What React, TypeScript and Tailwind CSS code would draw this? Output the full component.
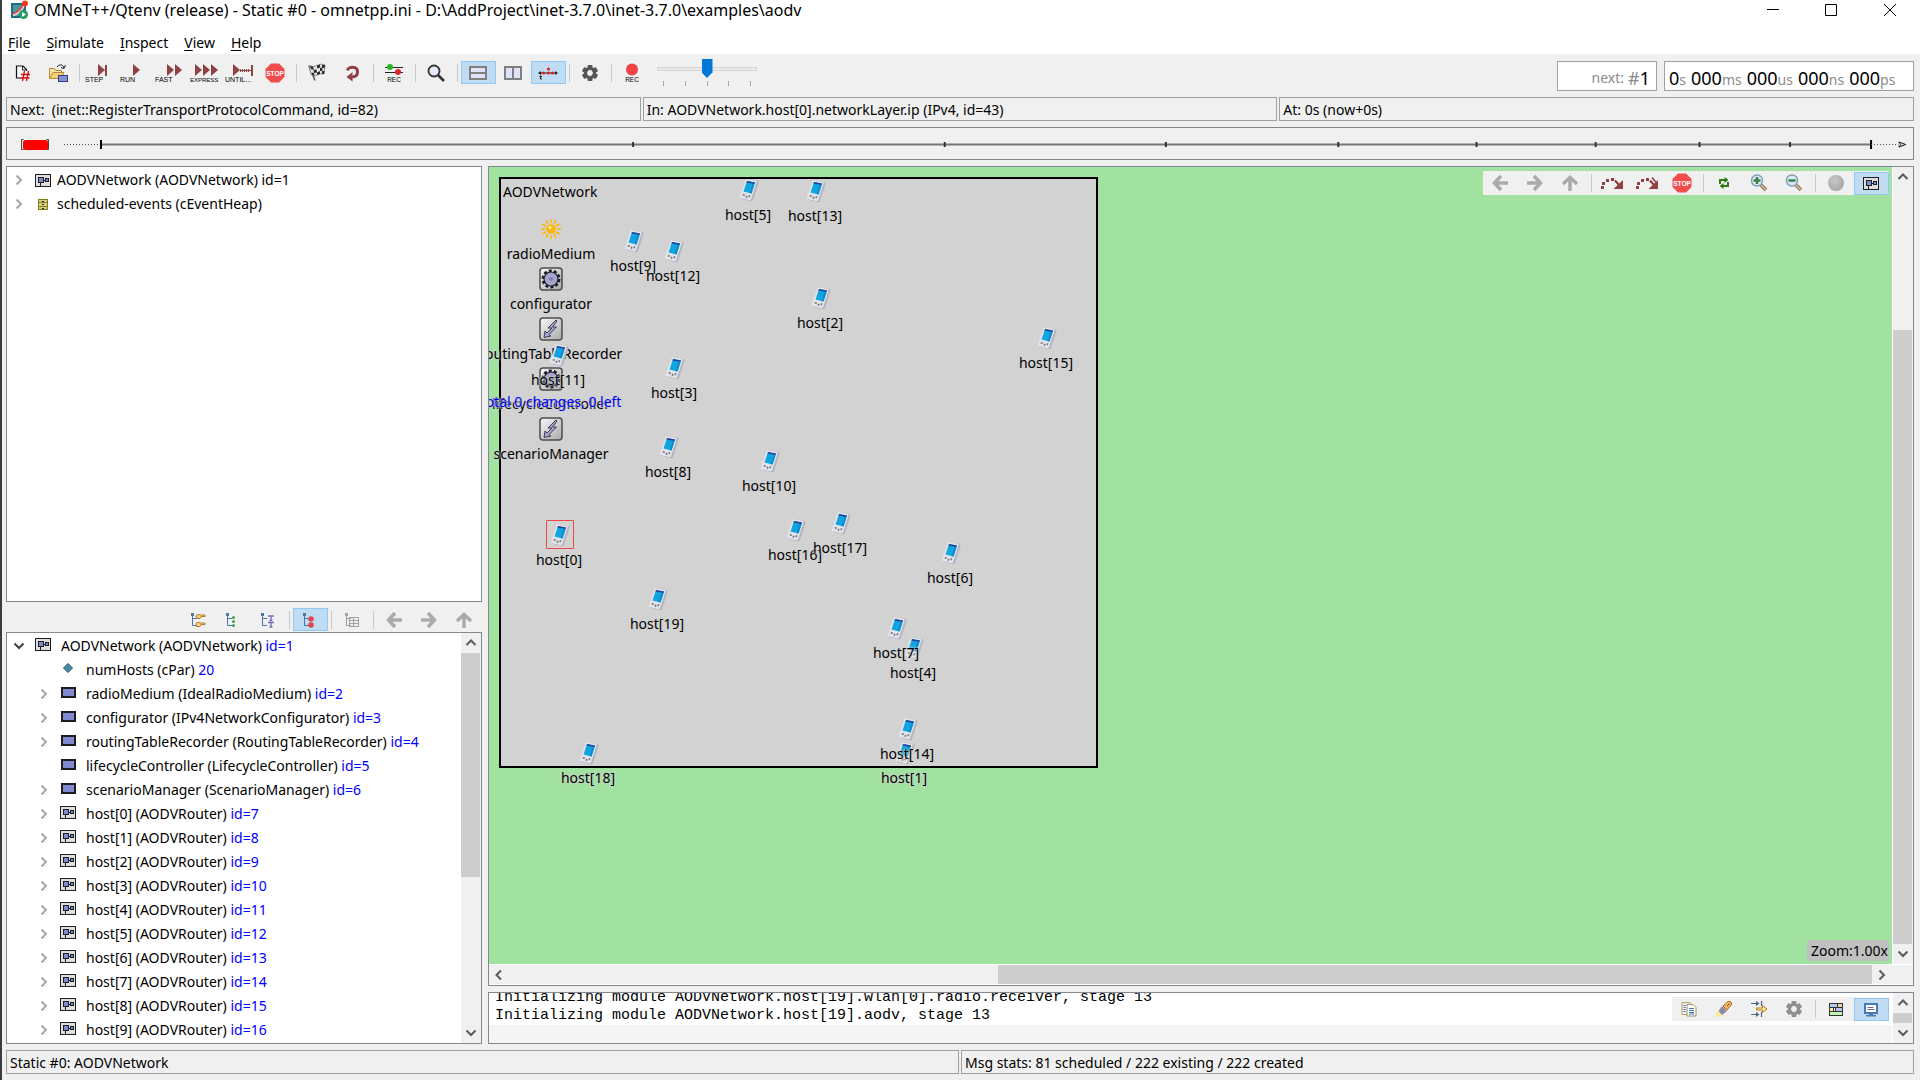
import React from "react";

/* ---------- shared pieces ---------- */

function ToolButton({ label, active, children }: { label: string; active?: boolean; children: React.ReactNode }) {
  return (
    <button
      type="button"
      aria-label={label}
      title={label}
      aria-pressed={active}
      className={
        "flex h-[23px] w-[35px] shrink-0 items-center justify-center pr-0.5 " +
        (active ? "border border-[#90c8f6] bg-[#c0dcf3]" : "")
      }
    >
      {children}
    </button>
  );
}

function Sep() {
  return (
    <div className="flex h-[18px] w-[7px] shrink-0 justify-center">
      <div className="w-px bg-[#c8c8c8]" />
    </div>
  );
}

function Chevron({ dir }: { dir: "up" | "down" | "left" | "right" }) {
  const d = {
    up: "M1.5 8 6 3.500l4.500 4.500",
    down: "M1.5 3.500 6 8l4.500-4.500",
    left: "M8 1.500 3.500 6 8 10.500",
    right: "M3.500 1.500 8 6 3.500 10.500",
  }[dir];
  return (
    <svg viewBox="0 0 12 12" className="size-3 shrink-0" fill="none" stroke="currentColor" strokeWidth="2">
      <path d={d} />
    </svg>
  );
}

function ScrollButton({ dir }: { dir: "up" | "down" | "left" | "right" }) {
  return (
    <button type="button" aria-label={"Scroll " + dir} className="flex size-5 shrink-0 items-center justify-center pr-px text-[#5a5a5a]">
      <Chevron dir={dir} />
    </button>
  );
}

/* ---------- icons ---------- */

function StopIcon() {
  return (
    <svg viewBox="0 0 20 20" className="size-5">
      <path d="M6 .5h8L19.500 6v8L14 19.500H6L.5 14V6z" fill="#f24c4c" />
      <text x="10" y="12.500" textAnchor="middle" fontSize="6.500" fontWeight="bold" fill="#fff" fontFamily="Liberation Sans, sans-serif">STOP</text>
    </svg>
  );
}

function PlayIcon({ text, kind }: { text: string; kind: "step" | "run" | "fast" | "express" | "until" }) {
  const starts = { step: [13], run: [13], fast: [12, 20], express: [5, 13, 21], until: [8] }[kind];
  return (
    <svg viewBox="0 0 30 22" className="h-[22px] w-[30px]" fill="#8f4143">
      {starts.map((x) => (
        <path key={x} d={`M${x} 2v12l7-6z`} />
      ))}
      {kind === "step" && <path d="M20 3h2v11h-2z" />}
      {kind === "until" && <path d="M15 7h1v3h-1zM15 8h11v1H15zM17 7h1v3h-1zM19 7h1v3h-1zM21 7h1v3h-1zM23 7h1v3h-1zM26 3h2v11h-2z" />}
      <text x="0" y="19.500" fontSize={kind === "express" ? "6" : "7"} fill="#000" fontFamily="Liberation Sans, sans-serif">{text}</text>
    </svg>
  );
}

function NewRunIcon() {
  return (
    <svg viewBox="0 0 18 18" className="size-[18px]" fill="none">
      <path d="M7 14H2.500V2H9l3.500 3.500V7" stroke="#111" strokeWidth="1.200" fill="#fafafa" />
      <path d="M8.500 2v4h4" stroke="#222" />
      <path d="M10.500 7 8.500 17M14.500 7l-2 10M7 10.500h9M6.500 14h9" stroke="#d01010" strokeWidth="1.300" />
    </svg>
  );
}

function OpenIcon() {
  return (
    <svg viewBox="0 0 20 20" className="size-5" fill="none">
      <path d="M1.500 15V5.500h5l1 2h6V11" fill="#f7e3a0" stroke="#b98a35" />
      <path d="M1.500 15.500 5 9.500h11l-3 6z" fill="#f5cf75" stroke="#b98a35" />
      <path d="M9 4c2-3 6-3 7 1m1.500-3L16 5.500 13 4.500" stroke="#222" />
      <rect x="10.500" y="12.500" width="9" height="6" fill="#8690d8" stroke="#303a80" />
    </svg>
  );
}

function FlagIcon() {
  return (
    <svg viewBox="0 0 20 20" className="size-5">
      <path d="M2 3 8 17.500" stroke="#555" strokeWidth="1.500" />
      <path d="M2 2.500q4 2.500 8 0t8-.5l-1 9q-4-1-7 1t-6-.5z" fill="#e8e8e8" stroke="#444" strokeWidth=".6" />
      <path d="M3 3l3 .8 1 3-3-.5zM10 2.500l3-1 .2 3-3 1zM15 2h3l-.5 3H15zM6.500 7l3-.5.500 3-3 .5zM13 4.700l2.500.3-.3 3H13zM10 9.500l3-1.500v3l-3 1zM15 8h2.500l-.5 3h-2zM4.500 9.500l2.500.5.500 2.500-2.500-.8z" fill="#2b2b2b" />
    </svg>
  );
}

function RebuildIcon() {
  return (
    <svg viewBox="0 0 18 18" className="size-[18px]" fill="none">
      <path d="M4.500 6.500C5 2.500 14.500 1.500 14.500 8c0 4-3 5-6 5" stroke="#8f4143" strokeWidth="3" />
      <path d="M9.500 8v9.500L3.500 13z" fill="#8f4143" />
    </svg>
  );
}

function RecFilterIcon() {
  return (
    <svg viewBox="0 0 20 20" className="size-5">
      <path d="M1 4.500h18M1 9.500h18" stroke="#222" />
      <circle cx="6" cy="4" r="3" fill="#28b428" />
      <circle cx="14" cy="9" r="3" fill="#d62a2a" />
      <text x="10" y="18.500" textAnchor="middle" fontSize="6.500" fill="#000" fontFamily="Liberation Sans, sans-serif">REC</text>
    </svg>
  );
}

function SearchIcon() {
  return (
    <svg viewBox="0 0 18 18" className="size-[18px]" fill="none" stroke="#333">
      <circle cx="7" cy="7" r="5.500" strokeWidth="1.800" fill="#e4eafa" />
      <path d="m11 11 6 6" strokeWidth="2.600" />
    </svg>
  );
}

function SplitIcon({ vertical }: { vertical?: boolean }) {
  return (
    <svg viewBox="0 0 18 14" className="h-3.5 w-[18px]">
      <rect x="1" y="1" width="16" height="12" fill="#dfe3f8" stroke="#808080" strokeWidth="2" />
      <path d={vertical ? "M9 1v12" : "M1 7h16"} stroke="#808080" strokeWidth="2" />
    </svg>
  );
}

function TimelineIcon() {
  return (
    <svg viewBox="0 0 20 14" className="h-3.5 w-5">
      <path d="M1 7h18" stroke="#222" />
      <path d="M0 7l3-2v4zM20 7l-3-2v4z" fill="#222" />
      <g fill="#e02020">
        <circle cx="5.500" cy="7" r="1.500" />
        <circle cx="10.500" cy="7" r="1.500" />
        <circle cx="14.500" cy="7" r="1.500" />
        <circle cx="10.500" cy="3" r="1.600" />
      </g>
      <path d="M2.500 9.500v3.500h1.500M1.500 10.500h2.500" stroke="#222" fill="none" />
    </svg>
  );
}

function GearIcon({ color }: { color: string }) {
  return (
    <svg viewBox="0 0 18 18" className="size-[18px]">
      <g fill={color}>
        {[0, 60, 120, 180, 240, 300].map((a) => (
          <rect key={a} x="6.500" y="1" width="5" height="5" rx="1" transform={`rotate(${a} 9 9)`} />
        ))}
      </g>
      <circle cx="9" cy="9" r="4.500" fill="none" stroke={color} strokeWidth="3.200" />
    </svg>
  );
}

function RecordIcon() {
  return (
    <svg viewBox="0 0 18 20" className="h-5 w-[18px]">
      <circle cx="9" cy="6.500" r="6" fill="#ee4444" />
      <text x="9" y="18.500" textAnchor="middle" fontSize="6.500" fill="#000" fontFamily="Liberation Sans, sans-serif">REC</text>
    </svg>
  );
}

function ArrowIcon({ dir }: { dir: "left" | "right" | "up" }) {
  const angle = { left: 0, right: 180, up: 90 }[dir];
  return (
    <svg viewBox="0 0 18 18" className="size-[18px]" fill="none" stroke="#aaaaaa" strokeWidth="3.500">
      <g transform={`rotate(${angle} 9 9)`}>
        <path d="M10 2 3.500 9l6.500 7M3.500 9H17" />
      </g>
    </svg>
  );
}

function CompoundIcon() {
  return (
    <svg viewBox="0 0 16 13" className="h-[13px] w-4 shrink-0" shapeRendering="crispEdges">
      <rect x=".5" y=".5" width="15" height="12" fill="#dedede" stroke="#1e1e1e" />
      <rect x="3.500" y="3.500" width="5" height="5" fill="#8189d2" stroke="#1e1e1e" />
      <rect x="10.500" y="4.500" width="3" height="3" fill="#8189d2" stroke="#1e1e1e" />
      <path d="M9 6.500h1M5.500 9v3" stroke="#1e1e1e" />
    </svg>
  );
}

function SimpleIcon() {
  return (
    <svg viewBox="0 0 16 13" className="h-[13px] w-4 shrink-0" shapeRendering="crispEdges">
      <rect x="2" y="2" width="13" height="9" fill="#8189d2" stroke="#1c1c1c" strokeWidth="2" />
    </svg>
  );
}

function ParamIcon() {
  return (
    <svg viewBox="0 0 16 13" className="h-[13px] w-4 shrink-0">
      <path d="M8 1.500 12.500 6 8 10.500 3.500 6z" fill="#468a96" stroke="#28508c" />
    </svg>
  );
}

function HeapIcon() {
  return (
    <svg viewBox="0 0 16 13" className="h-[13px] w-4 shrink-0" shapeRendering="crispEdges">
      <rect x="3.500" y="1.500" width="9" height="10" fill="#d4d08c" stroke="#80800c" />
      <path d="M4 4.500h8M4 8.500h8" stroke="#80800c" />
      <path d="M7 3h2M7 6.500h2M7 10.500h2" stroke="#222" />
    </svg>
  );
}

function JumpIcon({ double }: { double?: boolean }) {
  return (
    <svg viewBox="0 0 24 14" className="h-3.5 w-6" fill="#8f4143">
      <path d="M1 10h3v3H1zM2 6h3v3H2zM6 3h3v3H6zM11 2h3v3h-3z" />
      <path d="M23 4v9H13.500z" />
      <path d="M15 4.500 20 10" stroke="#8f4143" strokeWidth="2.200" />
      {double && <path d="m17 1.500 5 6" stroke="#8f4143" strokeWidth="1.500" />}
    </svg>
  );
}

function RefreshIcon() {
  return (
    <svg viewBox="0 0 14 14" className="size-3.5" fill="none" stroke="#2c7a12" strokeWidth="2">
      <path d="M3 8V4h5M11 6v4H6" />
      <path d="M7.500 1v6l4-3zM6.500 7v6l-4-3z" fill="#2c7a12" stroke="none" />
    </svg>
  );
}

function ZoomIcon({ plus }: { plus?: boolean }) {
  return (
    <svg viewBox="0 0 18 18" className="size-[18px]" fill="none">
      <path d="m11 11 5 5" stroke="#8c6c50" strokeWidth="3.500" />
      <path d="m11 11 5 5" stroke="#dcc09c" strokeWidth="1.500" />
      <circle cx="7" cy="6.500" r="5.500" fill="#dcebf4" stroke="#7e9db6" strokeWidth="1.400" />
      <path d={plus ? "M3.500 6.500h7M7 3v7" : "M3.500 6.500h7"} stroke="#388048" strokeWidth="2.500" />
    </svg>
  );
}

function TreeModeIcon({ kind }: { kind: "inherit" | "children" | "text" | "flat" | "grid" }) {
  const line = kind === "grid" ? "#a0a0a0" : "#4f74a8";
  return (
    <svg viewBox="0 0 16 16" className="size-4" fill="none">
      <path d="M2.500 3v10.500H7M2.500 6.500H7" stroke={line} />
      <rect x="1" y="1" width="3" height="3" fill={line} />
      {kind === "inherit" && (
        <g fill="#f5d48a" stroke="#b87a20">
          <path d="M6 3.500q2-2 4-.5h5v1.500h-4l-1 2H6.500z" />
          <path d="M6 11.500q2-2 4-.5h5v1.500h-4l-1 2H6.500z" />
        </g>
      )}
      {kind === "children" && (
        <g fill="#44a044">
          <circle cx="8.500" cy="5.500" r="1.500" />
          <circle cx="8.500" cy="9.500" r="1.500" />
          <circle cx="8.500" cy="13.500" r="1.500" />
        </g>
      )}
      {kind === "text" && <path d="M8 4h6M11 4v4.500M9.500 8.500h3M8 10.500h6M11 10.500v4.500M9.500 15h3" stroke="#7272be" strokeWidth="1.400" />}
      {kind === "flat" && (
        <g fill="#e04848">
          <circle cx="9" cy="7" r="2.800" />
          <circle cx="9" cy="13" r="2.800" />
        </g>
      )}
      {kind === "grid" && <path d="M5.500 5.500h9v9h-9zM6 8.500h9M6 11.500h9M9.500 6v8" stroke={line} />}
    </svg>
  );
}

function CopyIcon() {
  return (
    <svg viewBox="0 0 16 16" className="size-4">
      <path d="M1 1.500h8v12H1z" fill="#f4f6fc" stroke="#c0a050" />
      <path d="M6 3.500h6l3 3v8.500H6z" fill="#fff" stroke="#a0905c" />
      <path d="M2.500 4.500h2M2.500 6.500h2M2.500 8.500h2M2.500 10.500h2M8 7.500h5M8 9.500h5M8 11.500h5M8 13h5" stroke="#4a72b0" />
    </svg>
  );
}

function TorchIcon() {
  return (
    <svg viewBox="0 0 18 18" className="size-[18px]">
      <path d="M1 17 2 11l5 5z" fill="#ffe98a" />
      <path d="M3.500 11 7 6l5 5-5 4z" fill="#8d8ba0" />
      <path d="m8 6 5-4.500q4-.5 3.500 3L12 10z" fill="#f6b860" stroke="#b06818" />
      <path d="M12 6 14.500 3.500" stroke="#404040" />
    </svg>
  );
}

function FilterIcon() {
  return (
    <svg viewBox="0 0 18 18" className="size-[18px]" fill="none">
      <path d="M1 3.500h7M1 14.500h7" stroke="#4c6680" strokeWidth="1.200" />
      <path d="M6 1l3.500 2.500L6 6zM6 12l3.500 2.500L6 17z" fill="#4c6680" />
      <path d="M11.500 1v5M11.500 12v5" stroke="#4c6680" strokeWidth="1.200" />
      <path d="M6.500 8h6V5.500L17 9l-4.500 3.500V10h-6z" fill="#fde9a0" stroke="#b07c18" />
    </svg>
  );
}

function MessagesIcon() {
  return (
    <svg viewBox="0 0 16 16" className="size-4" shapeRendering="crispEdges">
      <rect x="1.500" y="2.500" width="13" height="12" fill="#fff" />
      <path d="M2 3h7v3H2z" fill="#a9cdf5" />
      <path d="M10 3h4v3h-4z" fill="#f5cfa4" />
      <path d="M2 7h3v3H2z" fill="#f6f0a4" />
      <path d="M7 7h7v3H7z" fill="#c0bcf5" />
      <path d="M2 11h12v3H2z" fill="#c0f5b4" />
      <path d="M1.500 2.500h13v12h-13zM2 6.500h12M2 10.500h12M9.500 3v3M5.500 7v3M7.500 7v3" stroke="#333" fill="none" />
    </svg>
  );
}

function MonitorIcon() {
  return (
    <svg viewBox="0 0 16 16" className="size-4">
      <rect x="2" y="3" width="12" height="9" fill="#fff" stroke="#4878b8" strokeWidth="2" />
      <path d="M4.500 6.500h6M4.500 8.500h7" stroke="#5a6a90" />
      <path d="M6 12.500h4v1.500H6zM3 14h10v1.500H3z" fill="#4878b8" />
    </svg>
  );
}

function AppIcon() {
  return (
    <svg viewBox="0 0 20 20" className="size-5 shrink-0">
      <rect x="1" y="3" width="15" height="15" fill="#1c6e82" />
      <rect x="3" y="5" width="11" height="11" fill="#4c97a4" />
      <path d="M3 15Q10 13 14 5" stroke="#e8e8e8" strokeWidth="2.500" fill="none" />
      <path d="M3 14Q9 12 13 5" stroke="#f04030" strokeWidth="1.600" fill="none" />
      <circle cx="15" cy="3.500" r="3" fill="#f23c22" />
      <circle cx="13.500" cy="14.500" r="4.500" fill="#279b60" />
      <path d="M12 12v5l4-2.500z" fill="#fff" />
    </svg>
  );
}

/* ---------- title, menu, toolbar ---------- */

function TitleBar() {
  return (
    <header className="flex h-[25px] shrink-0 items-start bg-white">
      <div className="flex h-5 items-center gap-1 pl-2">
        <AppIcon />
        <h1 className="text-base leading-5 whitespace-nowrap">
          OMNeT++/Qtenv (release) - Static #0 - omnetpp.ini - D:\AddProject\inet-3.7.0\inet-3.7.0\examples\aodv
        </h1>
      </div>
      <div className="ml-auto flex h-5 pr-px">
        <button type="button" aria-label="Minimize" className="flex w-[58px] items-center justify-center">
          <svg viewBox="0 0 12 12" className="size-3"><path d="M0 5.500h12" stroke="#000" /></svg>
        </button>
        <button type="button" aria-label="Maximize" className="flex w-[58px] items-center justify-center">
          <svg viewBox="0 0 12 12" className="size-3"><path d="M.5.5h11v11H.5z" stroke="#000" fill="none" /></svg>
        </button>
        <button type="button" aria-label="Close" className="flex w-[59px] items-center justify-center">
          <svg viewBox="0 0 12 12" className="size-3"><path d="m0 0 12 12M12 0 0 12" stroke="#000" /></svg>
        </button>
      </div>
    </header>
  );
}

function MenuBar() {
  return (
    <nav className="flex h-[29px] shrink-0 items-center gap-4 bg-white pl-1.5 pt-1.5">
      {["File", "Simulate", "Inspect", "View", "Help"].map((m) => (
        <button key={m} type="button" className="leading-[22px]">
          <span className="underline underline-offset-2">{m[0]}</span>
          {m.slice(1)}
        </button>
      ))}
    </nav>
  );
}

function SpeedSlider() {
  return (
    <div className="flex h-[38px] w-[100px] flex-col pt-1">
      <input
        type="range"
        aria-label="Animation speed"
        defaultValue={50}
        className="block h-5 w-full appearance-none bg-transparent [&::-webkit-slider-runnable-track]:h-1 [&::-webkit-slider-runnable-track]:border [&::-webkit-slider-runnable-track]:border-[#d6d6d6] [&::-webkit-slider-runnable-track]:bg-[#e7eaea] [&::-webkit-slider-thumb]:mt-[-9px] [&::-webkit-slider-thumb]:h-[19px] [&::-webkit-slider-thumb]:w-[11px] [&::-webkit-slider-thumb]:appearance-none [&::-webkit-slider-thumb]:bg-[#0078d7] [&::-webkit-slider-thumb]:[clip-path:polygon(0_0,100%_0,100%_70%,50%_100%,0_70%)]"
      />
      <div className="mt-0.5 flex justify-between px-1.5">
        {[0, 1, 2, 3, 4].map((i) => (
          <span key={i} className="h-[5px] w-px bg-[#a8a8a0]" />
        ))}
      </div>
    </div>
  );
}

function Unit({ n, u }: { n: string; u: string }) {
  return (
    <span>
      {n}
      <span className="text-sm text-[#8c8c8c]">{u}</span>
    </span>
  );
}

function MainToolbar() {
  return (
    <div className="flex h-[43px] shrink-0 items-start pl-1 pr-1.5 pt-[7px]">
      <div className="flex items-center" role="toolbar" aria-label="Simulation">
        <ToolButton label="New run"><NewRunIcon /></ToolButton>
        <ToolButton label="Open ini file"><OpenIcon /></ToolButton>
        <Sep />
        <ToolButton label="Step"><PlayIcon text="STEP" kind="step" /></ToolButton>
        <ToolButton label="Run"><PlayIcon text="RUN" kind="run" /></ToolButton>
        <ToolButton label="Fast"><PlayIcon text="FAST" kind="fast" /></ToolButton>
        <ToolButton label="Express"><PlayIcon text="EXPRESS" kind="express" /></ToolButton>
        <ToolButton label="Run until"><PlayIcon text="UNTIL..." kind="until" /></ToolButton>
        <ToolButton label="Stop"><StopIcon /></ToolButton>
        <Sep />
        <ToolButton label="Conclude simulation"><FlagIcon /></ToolButton>
        <ToolButton label="Rebuild network"><RebuildIcon /></ToolButton>
        <Sep />
        <ToolButton label="Eventlog recording"><RecFilterIcon /></ToolButton>
        <Sep />
        <ToolButton label="Find objects"><SearchIcon /></ToolButton>
        <Sep />
        <ToolButton label="Horizontal layout" active><SplitIcon /></ToolButton>
        <ToolButton label="Vertical layout"><SplitIcon vertical /></ToolButton>
        <ToolButton label="Show timeline" active><TimelineIcon /></ToolButton>
        <Sep />
        <ToolButton label="Preferences"><GearIcon color="#555555" /></ToolButton>
        <Sep />
        <ToolButton label="Record video"><RecordIcon /></ToolButton>
      </div>
      <div className="-mt-1.5 ml-[7px]"><SpeedSlider /></div>
      <div className="ml-auto flex gap-[7px] whitespace-nowrap">
        <output aria-label="Next event" className="flex h-[30px] w-[100px] items-center justify-end gap-1 border border-[#a0a0a0] bg-white pr-1.5 pt-1">
          <span className="text-sm text-[#8c8c8c]">next:</span>
          <span className="text-lg leading-6"><span className="text-[#8c8c8c]">#</span>1</span>
        </output>
        <output aria-label="Simulation time" className="flex h-[30px] w-[250px] items-center gap-[5px] border border-[#a0a0a0] bg-white pl-1 pt-1 text-lg leading-6">
          <Unit n="0" u="s" />
          <Unit n="000" u="ms" />
          <Unit n="000" u="us" />
          <Unit n="000" u="ns" />
          <Unit n="000" u="ps" />
        </output>
      </div>
    </div>
  );
}

function Cell({ children }: { children: React.ReactNode }) {
  return <div className="h-6 min-w-0 flex-1 truncate border border-[#a0a0a0] pl-[3px] leading-[23px] whitespace-pre">{children}</div>;
}

/* Logarithmic time axis marks. */
const TICKS = ["32.85%", "49.2%", "60.8%", "69.85%", "77.1%", "83.35%", "88.8%", "93.55%"];

function Timeline() {
  return (
    <div className="ml-1 mr-1.5 mt-1.5 h-[33px] shrink-0 border border-[#828790]">
      <svg className="block h-full w-full" role="img" aria-label="Event timeline">
        <rect x="16" y="12" width="25" height="10" rx="2.500" fill="#ff0000" />
        <path d="M16.500 11.500h-2v10h2M39.500 11.500h2v10h-2" stroke="#444" fill="none" />
        <line x1="57" x2="94" y1="16.500" y2="16.500" stroke="#555" strokeDasharray="1 2" />
        <line x1="94" x2="97.800%" y1="16.500" y2="16.500" stroke="#787878" strokeWidth="2" />
        <line x1="94" x2="94" y1="12" y2="21" stroke="#000" strokeWidth="2" />
        {TICKS.map((m) => (
          <line key={m} x1={m} x2={m} y1="14" y2="19" stroke="#333" strokeWidth="2" />
        ))}
        <line x1="97.800%" x2="97.800%" y1="12" y2="21" stroke="#000" strokeWidth="2" />
        <line x1="97.800%" x2="99.250%" y1="16.500" y2="16.500" stroke="#555" strokeDasharray="1 2" />
        <svg x="99.200%" width="10" height="31">
          <path d="m1 14 7 2.500L1 19l2-2.500z" fill="none" stroke="#111" />
        </svg>
      </svg>
    </div>
  );
}

/* ---------- left side ---------- */

function TopTree() {
  return (
    <ul className="min-h-0 flex-[436] border border-[#828790] bg-white pt-px">
      {[
        { icon: <CompoundIcon />, text: "AODVNetwork (AODVNetwork) id=1" },
        { icon: <HeapIcon />, text: "scheduled-events (cEventHeap)" },
      ].map((r) => (
        <li key={r.text} className="flex h-6 items-center whitespace-nowrap pl-1.5">
          <button type="button" aria-label={"Expand " + r.text} className="mr-2.5 text-[#a6a6a6]"><Chevron dir="right" /></button>
          {r.icon}
          <span className="ml-1.5">{r.text}</span>
        </li>
      ))}
    </ul>
  );
}

type Row = { name: string; type: string; val: string; kind: "param" | "simple" | "compound"; leaf?: boolean };

const ROWS: Row[] = [
  { name: "numHosts", type: "cPar", val: "20", kind: "param", leaf: true },
  { name: "radioMedium", type: "IdealRadioMedium", val: "id=2", kind: "simple" },
  { name: "configurator", type: "IPv4NetworkConfigurator", val: "id=3", kind: "simple" },
  { name: "routingTableRecorder", type: "RoutingTableRecorder", val: "id=4", kind: "simple" },
  { name: "lifecycleController", type: "LifecycleController", val: "id=5", kind: "simple", leaf: true },
  { name: "scenarioManager", type: "ScenarioManager", val: "id=6", kind: "simple" },
  ...Array.from({ length: 10 }, (_, i): Row => ({ name: `host[${i}]`, type: "AODVRouter", val: `id=${i + 7}`, kind: "compound" })),
];

function InspectorTree() {
  return (
    <div className="flex min-h-0 flex-[412] border border-[#828790] bg-white">
      <ul className="min-w-0 flex-1 overflow-hidden pt-px">
        <li className="flex h-6 items-center whitespace-nowrap pl-1.5">
          <button type="button" aria-label="Collapse AODVNetwork" className="mr-2.5 text-[#404040]"><Chevron dir="down" /></button>
          <span className="mb-1"><CompoundIcon /></span>
          <span className="ml-2.5">AODVNetwork (AODVNetwork) <span className="text-[#0000ff]">id=1</span></span>
        </li>
        {ROWS.map((r) => (
          <li key={r.name} className="flex h-6 items-center whitespace-nowrap pl-[31px]">
            {r.leaf ? (
              <span className="w-[22px]" />
            ) : (
              <button type="button" aria-label={"Expand " + r.name} className="mr-2.5 text-[#a6a6a6]"><Chevron dir="right" /></button>
            )}
            <span className="mb-1">
              {r.kind === "param" ? <ParamIcon /> : r.kind === "simple" ? <SimpleIcon /> : <CompoundIcon />}
            </span>
            <span className="ml-2.5">
              {r.name} ({r.type}) <span className="text-[#0000ff]">{r.val}</span>
            </span>
          </li>
        ))}
      </ul>
      <div className="flex w-5 shrink-0 flex-col items-start bg-[#f0f0f0]">
        <ScrollButton dir="up" />
        <div className="w-[19px] flex-[223] bg-[#cdcdcd]" />
        <div className="flex-[146]" />
        <ScrollButton dir="down" />
      </div>
    </div>
  );
}

function LeftPane() {
  return (
    <aside className="flex w-[calc(25%-1px)] min-w-0 flex-col">
      <TopTree />
      <div className="flex h-[30px] shrink-0 items-end justify-end pb-px" role="toolbar" aria-label="Inspector mode">
        <div className="flex items-center">
          <ToolButton label="Inheritance"><TreeModeIcon kind="inherit" /></ToolButton>
          <ToolButton label="Children"><TreeModeIcon kind="children" /></ToolButton>
          <ToolButton label="Flat"><TreeModeIcon kind="text" /></ToolButton>
          <Sep />
          <ToolButton label="Grouped" active><TreeModeIcon kind="flat" /></ToolButton>
          <Sep />
          <ToolButton label="Grid"><TreeModeIcon kind="grid" /></ToolButton>
          <Sep />
          <ToolButton label="Back"><ArrowIcon dir="left" /></ToolButton>
          <ToolButton label="Forward"><ArrowIcon dir="right" /></ToolButton>
          <ToolButton label="Parent"><ArrowIcon dir="up" /></ToolButton>
        </div>
      </div>
      <InspectorTree />
    </aside>
  );
}

/* ---------- network canvas ---------- */

function PhoneIcon() {
  return (
    <svg viewBox="0 0 22 24" className="h-6 w-[22px]">
      <path d="M9 1 19.500 3q1.500.5 1 2L15 22q-.5 1.500-2 1.200L4 21q-1.500-.5-1-2z" fill="#b2b6c0" />
      <path d="M8 1 18 3q1 .5.500 1.500L13 21.500q-.5 1-1.500.8L2.500 20q-1-.4-.6-1.500z" fill="#e2e4ea" />
      <path d="M9 3 17 4.500 13.500 15.500 5.500 13.500z" fill="#10a5e0" />
      <path d="M9 3 17 4.500 16.500 6 8.500 4.500z" fill="#2a3f98" />
      <path d="M14.500 6 16.500 6.200 13.500 15.500 11.500 15z" fill="#0c8cd0" />
      <path d="M5 16l2 .5-.5 1.500-2-.5zM8 17.500l1.500.5-.5 2-1.500-.5zM11 17l1.500.5-1 2-1.200-.5z" fill="#70727e" />
    </svg>
  );
}

function ModuleIcon({ kind }: { kind: "gear" | "bolt" }) {
  return (
    <svg viewBox="0 0 24 24" className="size-6">
      <defs>
        <linearGradient id="modbg" x1="0" y1="0" x2="1" y2="1">
          <stop offset="0" stopColor="#fafafa" />
          <stop offset="1" stopColor="#a8a8a8" />
        </linearGradient>
      </defs>
      <rect x="1" y="1" width="22" height="22" rx="3" fill="url(#modbg)" stroke="#4c4c4c" strokeWidth="1.500" />
      {kind === "gear" ? (
        <g>
          <circle cx="12" cy="12" r="8" fill="none" stroke="#1c1c28" strokeWidth="3" strokeDasharray="3 2.030" />
          <circle cx="12" cy="12" r="7" fill="#a6a6cc" stroke="#1c1c28" strokeWidth="1.200" />
          <circle cx="12" cy="12" r="2" fill="#8080a8" />
        </g>
      ) : (
        <path d="M17 3 9 11h4l-5 5-2-2-1 6.500 7-1.500-2-1.500 7.500-7.500h-4L18 4z" fill="#a6a6d8" stroke="#2c2c40" strokeWidth=".9" />
      )}
    </svg>
  );
}

function SunIcon() {
  return (
    <svg viewBox="0 0 24 24" className="size-6">
      {[0, 30, 60, 90, 120, 150, 180, 210, 240, 270, 300, 330].map((a) => (
        <path key={a} d="M12 2v4" stroke="#ffb400" strokeWidth="1.500" transform={`rotate(${a} 12 12)`} />
      ))}
      <circle cx="12" cy="12" r="4.800" fill="#ffb400" />
      <circle cx="11" cy="10.500" r="1.800" fill="#ffe69c" />
    </svg>
  );
}

/* [index, x, y] of icon centres, in canvas coordinates, back to front. */
const HOSTS: [number, number, number][] = [
  [1, 416, 586], [4, 425, 481], [7, 408, 461], [14, 419, 562], [18, 100, 586], [0, 71, 368],
  [2, 332, 131], [3, 186, 201], [5, 260, 23], [6, 462, 386], [8, 180, 280], [9, 145, 74],
  [10, 281, 294], [11, 70, 188], [12, 185, 84], [13, 327, 24], [15, 558, 171], [16, 307, 363],
  [17, 352, 356], [19, 169, 432],
];

const MODULES: { name: string; y: number; icon: React.ReactNode }[] = [
  { name: "radioMedium", y: 62, icon: <SunIcon /> },
  { name: "configurator", y: 112, icon: <ModuleIcon kind="gear" /> },
  { name: "routingTableRecorder", y: 162, icon: <ModuleIcon kind="bolt" /> },
  { name: "lifecycleController", y: 212, icon: <ModuleIcon kind="gear" /> },
  { name: "scenarioManager", y: 262, icon: <ModuleIcon kind="bolt" /> },
];

const HALO = "[text-shadow:0_0_2px_#d0d0d0,0_0_3px_#d0d0d0]";

function NetworkCanvas() {
  return (
    <div className="relative min-w-0 flex-1 overflow-hidden bg-[#a1e2a1]">
      <div className="absolute left-[10px] top-[10px] h-[591px] w-[599px] border-2 border-black bg-[#d2d2d2]">
        <span className="absolute left-0.5 top-px leading-6">AODVNetwork</span>
      </div>
      {MODULES.map((m) => (
        <div key={m.name} className="absolute flex w-0 flex-col items-center" style={{ left: 62, top: m.y - 12 }}>
          {m.icon}
          <span className={"mt-px leading-6 whitespace-nowrap " + HALO}>{m.name}</span>
        </div>
      ))}
      <div className="absolute left-[62px] top-[223px] flex w-0 justify-center">
        <span className={"leading-6 whitespace-nowrap text-[#0000ff] " + HALO}>total 0 changes, 0 left</span>
      </div>
      {HOSTS.map(([n, x, y]) => (
        <div key={n} className="absolute flex w-0 flex-col items-center" style={{ left: x, top: y - 12 }}>
          <PhoneIcon />
          <span className={"mt-px pr-0.5 leading-6 whitespace-nowrap " + HALO}>{`host[${n}]`}</span>
        </div>
      ))}
      <div className="absolute left-[57px] top-[353px] h-[29px] w-[28px] rounded-[1px] border border-[#f04848]" />
      <div className="absolute right-[3px] top-1 flex h-6 items-center bg-[#f0f0f0]" role="toolbar" aria-label="Canvas">
        <ToolButton label="Back"><ArrowIcon dir="left" /></ToolButton>
        <ToolButton label="Forward"><ArrowIcon dir="right" /></ToolButton>
        <ToolButton label="Parent"><ArrowIcon dir="up" /></ToolButton>
        <Sep />
        <ToolButton label="Run until next event"><JumpIcon /></ToolButton>
        <ToolButton label="Fast run until next event"><JumpIcon double /></ToolButton>
        <ToolButton label="Stop simulation"><StopIcon /></ToolButton>
        <Sep />
        <ToolButton label="Re-layout"><RefreshIcon /></ToolButton>
        <ToolButton label="Zoom in"><ZoomIcon plus /></ToolButton>
        <ToolButton label="Zoom out"><ZoomIcon /></ToolButton>
        <Sep />
        <ToolButton label="3D view">
          <span className="size-4 rounded-full bg-radial-[at_40%_35%] from-[#c8c8c8] to-[#9c9c9c]" />
        </ToolButton>
        <ToolButton label="2D view" active><CompoundIcon /></ToolButton>
      </div>
      <div className="absolute bottom-[3px] right-[3px] rounded-[2px] bg-[#c0c0c0] pl-1 pr-px leading-[21px]">Zoom:1.00x</div>
    </div>
  );
}

function NetworkPane() {
  return (
    <section className="flex min-h-0 flex-1 flex-col border border-[#828790] bg-[#f0f0f0]">
      <div className="flex min-h-0 flex-1">
        <NetworkCanvas />
        <div className="flex w-[21px] shrink-0 flex-col items-start border-l border-white">
          <ScrollButton dir="up" />
          <div className="flex-[143]" />
          <div className="w-[19px] flex-[612] bg-[#cdcdcd]" />
          <ScrollButton dir="down" />
        </div>
      </div>
      <div className="flex h-[21px] shrink-0 border-y border-white">
        <ScrollButton dir="left" />
        <div className="flex-[488]" />
        <div className="flex-[873] bg-[#cdcdcd]" />
        <ScrollButton dir="right" />
        <div className="w-[21px]" />
      </div>
    </section>
  );
}

function LogPane() {
  return (
    <section className="flex h-[52px] shrink-0 border border-[#828790] bg-[#f4f4f4]">
      <div className="relative min-w-0 flex-1 overflow-hidden">
        <div className="flex h-8 flex-col justify-end bg-white pl-1.5 font-['Liberation_Mono',monospace] text-[15px] leading-[18px] whitespace-pre">
          <div>Initializing module AODVNetwork.host[19].wlan[0].radio.receiver, stage 13</div>
          <div>Initializing module AODVNetwork.host[19].aodv, stage 13</div>
        </div>
        <div className="absolute right-[3px] top-1 flex h-6 items-center bg-[#f0f0f0]" role="toolbar" aria-label="Log">
          <ToolButton label="Copy"><CopyIcon /></ToolButton>
          <ToolButton label="Find"><TorchIcon /></ToolButton>
          <ToolButton label="Filter"><FilterIcon /></ToolButton>
          <ToolButton label="Log settings"><GearIcon color="#909090" /></ToolButton>
          <Sep />
          <ToolButton label="Messages"><MessagesIcon /></ToolButton>
          <ToolButton label="Log" active><MonitorIcon /></ToolButton>
        </div>
      </div>
      <div className="flex w-[21px] shrink-0 flex-col items-start border-l border-white bg-[#f0f0f0]">
        <ScrollButton dir="up" />
        <div className="w-[19px] flex-1 bg-[#cdcdcd]" />
        <ScrollButton dir="down" />
      </div>
    </section>
  );
}

export default function App() {
  return (
    <div className="flex h-screen flex-col overflow-hidden border-l-2 border-[#3c3c3c] bg-[#f0f0f0] font-['Noto_Sans',sans-serif] text-sm text-black">
      <TitleBar />
      <MenuBar />
      <MainToolbar />
      <div className="flex shrink-0 gap-0.5 pl-1 pr-1.5">
        <Cell>{"Next:  (inet::RegisterTransportProtocolCommand, id=82)"}</Cell>
        <Cell>In: AODVNetwork.host[0].networkLayer.ip (IPv4, id=43)</Cell>
        <Cell>At: 0s (now+0s)</Cell>
      </div>
      <Timeline />
      <main className="mt-1.5 flex min-h-0 flex-1 gap-1.5 pl-1 pr-1.5">
        <LeftPane />
        <div className="flex min-w-0 flex-1 flex-col gap-1.5">
          <NetworkPane />
          <LogPane />
        </div>
      </main>
      <footer className="mb-1.5 mt-1.5 flex shrink-0 gap-0.5 pl-1 pr-1.5">
        <Cell>Static #0: AODVNetwork</Cell>
        <Cell>Msg stats: 81 scheduled / 222 existing / 222 created</Cell>
      </footer>
    </div>
  );
}
